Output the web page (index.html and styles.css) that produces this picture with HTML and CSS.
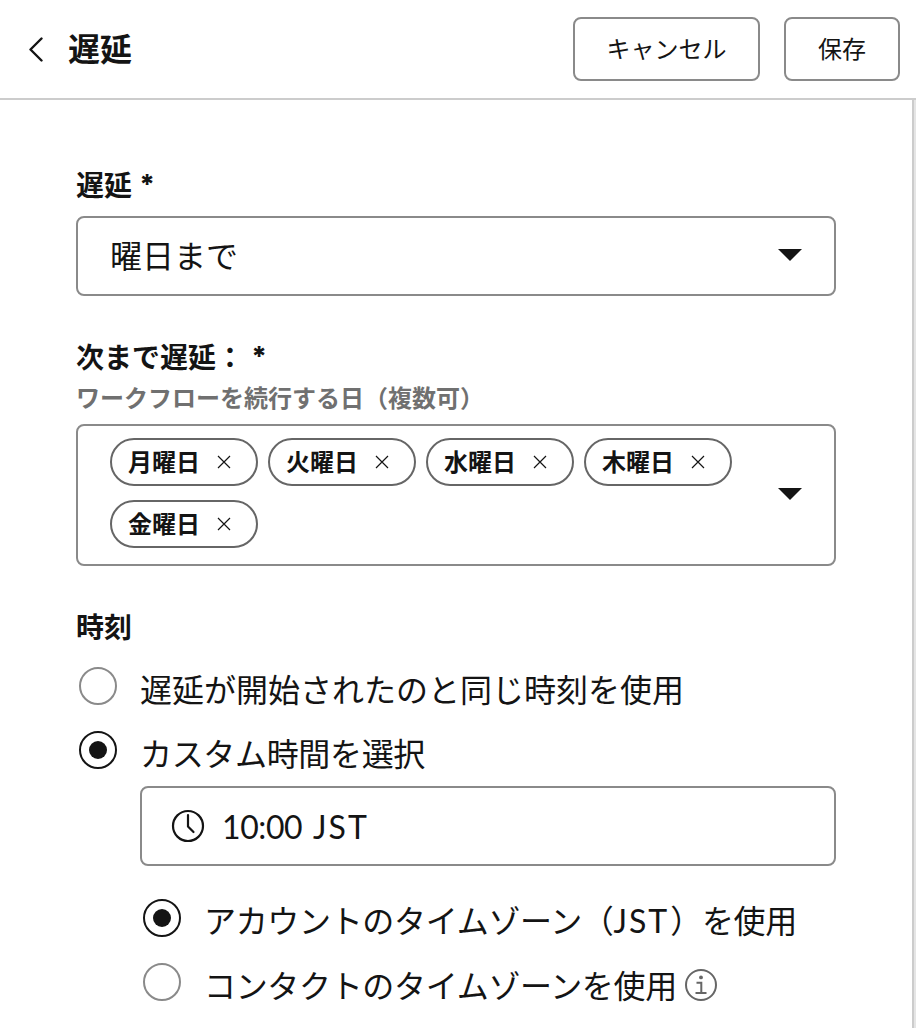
FILE: index.html
```html
<!DOCTYPE html>
<html lang="ja">
<head>
<meta charset="utf-8">
<title>遅延</title>
<link rel="stylesheet" href="styles.css">
</head>
<body>
<header class="header">
  <svg class="back" width="16" height="26" viewBox="0 0 16 26"><path d="M13.5 2.5 L2.5 13.5 L13.5 24.5"/></svg>
  <h1 class="title">遅延</h1>
  <button class="button button-cancel">キャンセル</button>
  <button class="button button-save">保存</button>
</header>
<div class="body">
  <main class="form">
    <div class="label">遅延 <span class="required">*</span></div>
    <div class="field select">
      <span class="select-value">曜日まで</span>
      <svg class="caret" width="24" height="12" viewBox="0 0 24 12"><path d="M0 0H24L12 12Z"/></svg>
    </div>
    <div class="label label-days">次まで遅延： <span class="required">*</span></div>
    <div class="help">ワークフローを続行する日（複数可）</div>
    <div class="field multi">
      <div class="chips">
        <span class="chip">月曜日<svg class="remove" width="14" height="14" viewBox="0 0 14 14"><path d="M1 1L13 13M13 1L1 13"/></svg></span>
        <span class="chip">火曜日<svg class="remove" width="14" height="14" viewBox="0 0 14 14"><path d="M1 1L13 13M13 1L1 13"/></svg></span>
        <span class="chip">水曜日<svg class="remove" width="14" height="14" viewBox="0 0 14 14"><path d="M1 1L13 13M13 1L1 13"/></svg></span>
        <span class="chip">木曜日<svg class="remove" width="14" height="14" viewBox="0 0 14 14"><path d="M1 1L13 13M13 1L1 13"/></svg></span>
        <span class="chip">金曜日<svg class="remove" width="14" height="14" viewBox="0 0 14 14"><path d="M1 1L13 13M13 1L1 13"/></svg></span>
      </div>
      <svg class="caret" width="24" height="12" viewBox="0 0 24 12"><path d="M0 0H24L12 12Z"/></svg>
    </div>
    <div class="label label-time">時刻</div>
    <div class="option"><span class="radio"></span><span class="option-text">遅延が開始されたのと同じ時刻を使用</span></div>
    <div class="option"><span class="radio radio-on"></span><span class="option-text tight">カスタム時間を選択</span></div>
    <div class="nested">
      <div class="field time">
        <svg class="clock" width="34" height="34" viewBox="0 0 34 34"><circle cx="17" cy="17" r="15"/><path d="M17 6V17.5L22.5 23"/></svg>
        <span class="time-value">10:00 <span class="time-zone">JST</span></span>
      </div>
      <div class="option"><span class="radio radio-on"></span><span class="option-text tight">アカウントのタイムゾーン（<span class="zone">JST</span>）を使用</span></div>
      <div class="option"><span class="radio"></span><span class="option-text tight">コンタクトのタイムゾーンを使用</span>
        <svg class="info" width="34" height="34" viewBox="0 0 34 34"><circle class="ring" cx="17" cy="17" r="15"/><circle class="dot" cx="17" cy="9.4" r="1.9"/><path d="M12.5 14.8H17.3V25M11.5 25H22.5"/></svg>
      </div>
    </div>
  </main>
  <div class="edge"></div>
</div>
</body>
</html>
```

FILE: styles.css
```css
* { box-sizing: border-box; }
body {
  margin: 0;
  width: 916px;
  height: 1028px;
  overflow: hidden;
  background: #fff;
  color: #141414;
  font-family: "Noto Sans CJK JP", sans-serif;
}
svg { display: block; flex: none; fill: none; }
.header {
  display: flex;
  align-items: center;
  height: 100px;
  padding: 0 16px 0 28px;
  border-bottom: 2px solid #ccc;
}
.back { stroke: #141414; stroke-width: 2.4; stroke-linecap: round; stroke-linejoin: round; }
.title { margin: 0 auto 0 24px; padding-bottom: 4px; font-size: 32px; line-height: 48px; font-weight: 700; }
.button {
  height: 64px;
  padding: 0 0 4px;
  border: 2px solid #8a8a8a;
  border-radius: 8px;
  background: #fff;
  color: inherit;
  font-family: inherit;
  font-size: 24px;
}
.button-cancel { width: 187px; margin-right: 24px; }
.button-save { width: 116px; }
.body { display: flex; height: 928px; }
.form { flex: 1; padding: 65px 76px 0; }
.edge { width: 4px; background: #e5e5e5; border-left: 2px solid #ccc; }
.label { height: 51px; font-size: 28px; line-height: 38px; font-weight: 700; white-space: nowrap; }
.required { margin-left: 1px; font-family: Inter, sans-serif; font-size: 27px; font-weight: 800; line-height: 1; vertical-align: 2px; }
.label-days { height: 47px; margin-top: 41px; }
.label-time { height: 47px; margin-top: 41px; }
.help { height: 40px; line-height: 26px; font-size: 24px; font-weight: 700; color: #707070; white-space: nowrap; }
.field {
  display: flex;
  align-items: center;
  width: 760px;
  border: 2px solid #8a8a8a;
  border-radius: 8px;
}
.select { height: 80px; padding: 0 32px; justify-content: space-between; }
.select-value { padding-bottom: 4px; font-size: 32px; line-height: 44px; }
.caret { margin-bottom: 2px; fill: #141414; }
.multi { height: 142px; padding: 0 32px; justify-content: space-between; }
.chips { display: flex; flex-wrap: wrap; gap: 14px 10px; width: 630px; margin-top: -4px; }
.chip {
  display: flex;
  align-items: center;
  justify-content: space-between;
  width: 148px;
  height: 48px;
  padding: 0 25px 4px 16px;
  border: 2px solid #666;
  border-radius: 24px;
  font-size: 24px;
  font-weight: 700;
  white-space: nowrap;
}
.remove { stroke: #141414; stroke-width: 1.2; margin-top: 4px; }
.option { display: flex; align-items: center; height: 64px; padding-left: 3px; white-space: nowrap; }
.radio {
  display: grid;
  place-items: center;
  flex: none;
  width: 38px;
  height: 38px;
  margin-right: 23px;
  border: 2px solid #8a8a8a;
  border-radius: 50%;
}
.radio-on { border-color: #141414; }
.radio-on::before { content: ""; width: 18px; height: 18px; border-radius: 50%; background: #141414; }
.option-text { padding-top: 3px; font-size: 32px; line-height: 44px; }
.tight { letter-spacing: -0.33px; }
.nested { padding: 4px 0 0 64px; }
.time { width: 696px; height: 80px; margin-bottom: 20px; padding-left: 29px; }
.clock { stroke: #141414; stroke-width: 2.2; stroke-linecap: round; stroke-linejoin: round; }
.time-value { margin-left: 17px; font-family: Lato, sans-serif; font-size: 32px; letter-spacing: -0.4px; }
.time-zone { margin-left: 3px; letter-spacing: 2px; }
.zone { margin-right: 1px; font-family: Lato, sans-serif; letter-spacing: 2px; }
.info { margin: 6px 0 0 7px; stroke: #666; stroke-width: 2; }
.info .dot { fill: #666; stroke: none; }
```
